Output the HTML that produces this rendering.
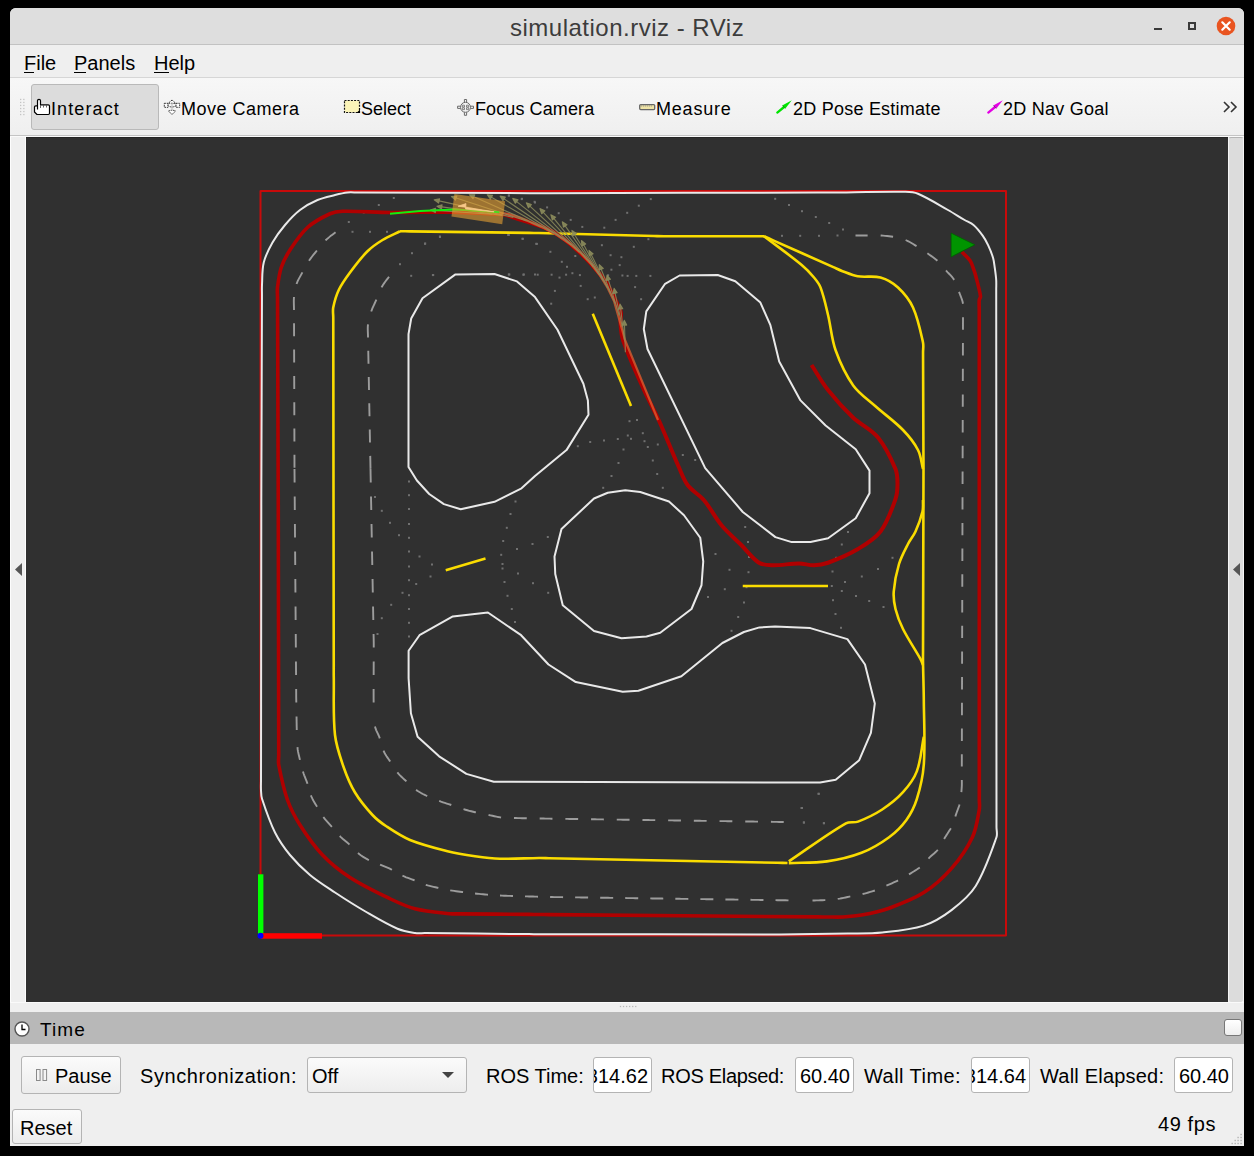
<!DOCTYPE html>
<html><head><meta charset="utf-8">
<style>
html,body{margin:0;padding:0;background:#000;width:1254px;height:1156px;overflow:hidden}
body{position:relative;font-family:"Liberation Sans",sans-serif;color:#000}
.a{position:absolute}
.t{position:absolute;white-space:nowrap;line-height:1}
#win{position:absolute;left:10px;top:8px;width:1234px;height:1138px;background:#efefef;border-radius:6px 6px 0 0;overflow:hidden}
</style></head><body>
<div id="win"></div>
<!-- title bar -->
<div class="a" style="left:10px;top:8px;width:1234px;height:36px;background:#dedede;border-radius:6px 6px 0 0"></div>
<div class="a" style="left:10px;top:44px;width:1234px;height:1px;background:#c2c2c2"></div>
<div class="t" id="title" style="left:510px;top:16px;font-size:24px;letter-spacing:0.5px;color:#3c3c3c">simulation.rviz - RViz</div>
<div class="a" style="left:1154px;top:28px;width:8px;height:2px;background:#3a3a3a"></div>
<div class="a" style="left:1188px;top:22px;width:4px;height:4px;border:2px solid #3a3a3a"></div>
<svg class="a" style="left:1216px;top:16px" width="20" height="20"><circle cx="10" cy="10" r="9.3" fill="#e95420"/><path d="M6.3 6.3 L13.7 13.7 M13.7 6.3 L6.3 13.7" stroke="#fff" stroke-width="2.2" stroke-linecap="round"/></svg>
<!-- menu bar -->
<div class="a" style="left:10px;top:45px;width:1234px;height:32px;background:#efefef"></div>
<div class="a" style="left:10px;top:77px;width:1234px;height:1px;background:#d6d6d6"></div>
<div class="t" id="m1" style="left:24px;top:53px;font-size:20px">File</div>
<div class="t" id="m2" style="left:74px;top:53px;font-size:20px">Panels</div>
<div class="t" id="m3" style="left:154px;top:53px;font-size:20px">Help</div>
<div class="a" style="left:24px;top:72px;width:10px;height:1px;background:#000"></div>
<div class="a" style="left:74px;top:72px;width:12px;height:1px;background:#000"></div>
<div class="a" style="left:154px;top:72px;width:15px;height:1px;background:#000"></div>
<!-- toolbar -->
<div class="a" style="left:10px;top:78px;width:1234px;height:57px;background:linear-gradient(#f7f7f7,#efefef)"></div>
<div class="a" style="left:10px;top:135px;width:1234px;height:1px;background:#c4c4c4"></div>
<div class="a" style="left:10px;top:136px;width:1234px;height:1px;background:#fafafa"></div>
<svg class="a" style="left:18px;top:97px" width="8" height="20"><g fill="#c4c4c4"><rect x="2" y="1.8" width="1.3" height="1.3"/><rect x="2" y="4.8" width="1.3" height="1.3"/><rect x="2" y="7.8" width="1.3" height="1.3"/><rect x="2" y="10.9" width="1.3" height="1.3"/><rect x="2" y="13.9" width="1.3" height="1.3"/><rect x="2" y="16.9" width="1.3" height="1.3"/><rect x="5.2" y="1.8" width="1.3" height="1.3"/><rect x="5.2" y="4.8" width="1.3" height="1.3"/><rect x="5.2" y="7.8" width="1.3" height="1.3"/><rect x="5.2" y="10.9" width="1.3" height="1.3"/><rect x="5.2" y="13.9" width="1.3" height="1.3"/><rect x="5.2" y="16.9" width="1.3" height="1.3"/></g></svg>
<div class="a" style="left:31px;top:84px;width:126px;height:44px;background:#dcdcdc;border:1px solid #b9b9b9;border-radius:3px"></div>
<svg class="a" style="left:33px;top:97px" width="18" height="20"><path d="M4.5,12.5 V3.8 A1.5,1.5 0 0 1 7.5,3.8 V7.8 H15.3 Q16.5,7.8 16.5,9 V16.3 Q16.5,17.5 15.3,17.5 H4 L1.5,15 V10 Q1.5,8.8 2.7,8.8 H4.5" fill="#fff" stroke="#000" stroke-width="1.2" stroke-linejoin="round"/><path d="M7.5,8 V11 M10.5,8 V10.5 M13.5,8 V10.5" stroke="#555" stroke-width="0.9"/></svg>
<div class="t" id="tb1" style="left:51px;top:100px;font-size:18px;letter-spacing:1.1px">Interact</div>
<svg class="a" style="left:158px;top:92px" width="30" height="30"><g fill="#fff" stroke="#333" stroke-width="1" stroke-dasharray="1.6 0.8"><path d="M14,8 L9.5,12 Q14,10.5 18.5,12 Z"/><rect x="6.3" y="11.3" width="3.7" height="4"/><rect x="18" y="11.3" width="3.7" height="4"/><path d="M9.8,13.5 Q14,16.5 18.2,13.5"/><path d="M14,22.5 L10.5,19 Q14,17.5 17.5,19 Z"/></g><path d="M14,11 V18" stroke="#bbb" stroke-width="1"/></svg>
<div class="t" id="tb2" style="left:181px;top:100px;font-size:18px;letter-spacing:0.5px">Move Camera</div>
<svg class="a" style="left:340px;top:92px" width="30" height="30"><rect x="4.5" y="8.5" width="15" height="12" fill="#fbf4b8" stroke="#111" stroke-width="1.2" stroke-dasharray="2 1.2"/><path d="M20,17.5 V21 H16.5 Z" fill="#000"/></svg>
<div class="t" id="tb3" style="left:361px;top:100px;font-size:18px">Select</div>
<svg class="a" style="left:450px;top:92px" width="30" height="30"><g fill="none" stroke="#6a6a6a" stroke-width="1"><circle cx="15.5" cy="15.3" r="5"/><path d="M14.4,10.3 V7.5 H16.6 V10.3 M14.4,20.3 V23.3 H16.6 V20.3 M10.5,14.2 H7.6 V16.4 H10.5 M20.5,14.2 H23.5 V16.4 H20.5"/><path d="M12.3,13.2 H14.5 V15 H12.3Z M16.5,13.2 H18.7 V15 H16.5Z M12.3,15.8 H14.5 V17.6 H12.3Z M16.5,15.8 H18.7 V17.6 H16.5Z" stroke-width="0.8"/></g></svg>
<div class="t" id="tb4" style="left:475px;top:100px;font-size:18px;letter-spacing:0.1px">Focus Camera</div>
<svg class="a" style="left:636px;top:92px" width="30" height="30"><rect x="3.7" y="12.6" width="15" height="5" rx="1" fill="#efe4a6" stroke="#666" stroke-width="1.3"/><path d="M5.3,13.3 V14.6 M7.3,13.3 V14.6 M9.3,13.3 V14.6 M11.3,13.3 V14.6 M13.3,13.3 V14.6 M15.3,13.3 V14.6" stroke="#888" stroke-width="0.8"/></svg>
<div class="t" id="tb5" style="left:656px;top:100px;font-size:18px;letter-spacing:0.8px">Measure</div>
<svg class="a" style="left:770px;top:92px" width="30" height="30"><path d="M7.3,20.6 L13.5,15.5" stroke="#00e400" stroke-width="2.3" stroke-linecap="round"/><path d="M21.8,8.2 L12.2,13.5 L15.2,16.8 Z" fill="#00e400"/><path d="M12.6,13.6 L15,16.3" stroke="#0a4a0a" stroke-opacity="0.6" stroke-width="0.8"/></svg>
<div class="t" id="tb6" style="left:793px;top:100px;font-size:18px;letter-spacing:0.23px">2D Pose Estimate</div>
<svg class="a" style="left:981px;top:92px" width="30" height="30"><path d="M7.3,20.6 L13.5,15.5" stroke="#e400e4" stroke-width="2.3" stroke-linecap="round"/><path d="M21.8,8.2 L12.2,13.5 L15.2,16.8 Z" fill="#e400e4"/><path d="M12.6,13.6 L15,16.3" stroke="#0a4a0a" stroke-opacity="0.6" stroke-width="0.8"/></svg>
<div class="t" id="tb7" style="left:1003px;top:100px;font-size:18px;letter-spacing:0.24px">2D Nav Goal</div>
<svg class="a" style="left:1222px;top:100px" width="16" height="14"><path d="M2 2 L7 7 L2 12 M9 2 L14 7 L9 12" fill="none" stroke="#333" stroke-width="1.6"/></svg>
<!-- side panels -->
<div class="a" style="left:10px;top:137px;width:16px;height:865px;background:#efefef"></div>
<div class="a" style="left:10px;top:137px;width:1px;height:865px;background:#fdfdfd"></div>
<div class="a" style="left:25px;top:137px;width:1px;height:865px;background:#fdfdfd"></div>
<svg class="a" style="left:14px;top:562px" width="9" height="15"><path d="M8 1 L1 7.5 L8 14 Z" fill="#555"/></svg>
<div class="a" style="left:1228px;top:137px;width:14px;height:864px;background:#dcdcdc;border:1px solid #f4f4f4;border-top-color:#b4b4b4;border-radius:3px"></div>
<svg class="a" style="left:1232px;top:562px" width="9" height="15"><path d="M8 1 L1 7.5 L8 14 Z" fill="#555"/></svg>
<!-- viewport -->
<div class="a" style="left:26px;top:137px;width:1202px;height:865px;background:#303030"></div>
<div class="a" style="left:26px;top:137px;width:1202px;height:1px;background:#262626"></div>
<svg width="1254" height="1156" style="position:absolute;left:0;top:0">
<defs><clipPath id="vp"><rect x="26" y="137" width="1202" height="865"/></clipPath></defs>
<g clip-path="url(#vp)" fill="none" stroke-linejoin="round" stroke-linecap="butt">
<g fill="#707070" stroke="none"><rect x="392.8" y="197.0" width="2" height="2"/><rect x="377.8" y="204.0" width="2" height="2"/><rect x="362.8" y="211.5" width="2" height="2"/><rect x="347.8" y="221.0" width="2" height="2"/><rect x="351.5" y="230.8" width="2" height="2"/><rect x="369.0" y="230.8" width="2" height="2"/><rect x="386.0" y="230.8" width="2" height="2"/><rect x="399.0" y="263.2" width="2" height="2"/><rect x="411.0" y="252.2" width="2" height="2"/><rect x="424.0" y="242.8" width="2" height="2"/><rect x="439.0" y="236.0" width="2" height="2"/><rect x="410.2" y="274.8" width="2" height="2"/><rect x="432.2" y="274.0" width="2" height="2"/><rect x="507.8" y="273.5" width="2" height="2"/><rect x="522.8" y="273.5" width="2" height="2"/><rect x="534.0" y="273.5" width="2" height="2"/><rect x="507.8" y="234.0" width="2" height="2"/><rect x="521.5" y="237.8" width="2" height="2"/><rect x="535.2" y="242.8" width="2" height="2"/><rect x="534.0" y="201.5" width="2" height="2"/><rect x="521.0" y="197.8" width="2" height="2"/><rect x="507.8" y="194.5" width="2" height="2"/><rect x="507.9" y="194.6" width="2" height="2"/><rect x="520.7" y="198.1" width="2" height="2"/><rect x="533.6" y="200.8" width="2" height="2"/><rect x="546.1" y="206.4" width="2" height="2"/><rect x="557.7" y="212.2" width="2" height="2"/><rect x="569.7" y="218.9" width="2" height="2"/><rect x="581.3" y="225.9" width="2" height="2"/><rect x="603.3" y="226.7" width="2" height="2"/><rect x="614.6" y="218.9" width="2" height="2"/><rect x="626.2" y="211.8" width="2" height="2"/><rect x="637.8" y="204.7" width="2" height="2"/><rect x="649.8" y="198.1" width="2" height="2"/><rect x="438.9" y="235.5" width="2" height="2"/><rect x="424.2" y="242.5" width="2" height="2"/><rect x="507.2" y="234.0" width="2" height="2"/><rect x="521.8" y="237.8" width="2" height="2"/><rect x="535.9" y="242.9" width="2" height="2"/><rect x="549.4" y="250.8" width="2" height="2"/><rect x="560.8" y="260.8" width="2" height="2"/><rect x="566.0" y="265.8" width="2" height="2"/><rect x="574.3" y="255.0" width="2" height="2"/><rect x="600.9" y="244.2" width="2" height="2"/><rect x="609.6" y="254.2" width="2" height="2"/><rect x="620.4" y="256.2" width="2" height="2"/><rect x="632.8" y="245.8" width="2" height="2"/><rect x="647.4" y="238.2" width="2" height="2"/><rect x="431.9" y="274.1" width="2" height="2"/><rect x="508.3" y="273.5" width="2" height="2"/><rect x="522.4" y="273.7" width="2" height="2"/><rect x="536.7" y="273.7" width="2" height="2"/><rect x="550.6" y="273.7" width="2" height="2"/><rect x="558.5" y="276.6" width="2" height="2"/><rect x="565.1" y="273.7" width="2" height="2"/><rect x="571.4" y="272.2" width="2" height="2"/><rect x="578.9" y="274.1" width="2" height="2"/><rect x="607.1" y="274.3" width="2" height="2"/><rect x="621.4" y="274.5" width="2" height="2"/><rect x="626.6" y="274.9" width="2" height="2"/><rect x="635.3" y="274.9" width="2" height="2"/><rect x="649.4" y="274.9" width="2" height="2"/><rect x="610.4" y="268.7" width="2" height="2"/><rect x="618.7" y="264.1" width="2" height="2"/><rect x="553.9" y="289.9" width="2" height="2"/><rect x="579.7" y="284.9" width="2" height="2"/><rect x="550.2" y="302.7" width="2" height="2"/><rect x="586.7" y="298.2" width="2" height="2"/><rect x="593.8" y="296.5" width="2" height="2"/><rect x="634.1" y="286.1" width="2" height="2"/><rect x="640.1" y="298.2" width="2" height="2"/><rect x="628.5" y="420.2" width="2" height="2"/><rect x="636.0" y="419.0" width="2" height="2"/><rect x="641.8" y="432.2" width="2" height="2"/><rect x="626.8" y="434.5" width="2" height="2"/><rect x="630.0" y="437.8" width="2" height="2"/><rect x="643.5" y="440.2" width="2" height="2"/><rect x="656.8" y="443.5" width="2" height="2"/><rect x="646.8" y="446.0" width="2" height="2"/><rect x="622.5" y="448.5" width="2" height="2"/><rect x="616.8" y="438.0" width="2" height="2"/><rect x="603.0" y="439.5" width="2" height="2"/><rect x="589.2" y="441.0" width="2" height="2"/><rect x="576.8" y="445.2" width="2" height="2"/><rect x="617.5" y="462.0" width="2" height="2"/><rect x="651.8" y="459.5" width="2" height="2"/><rect x="669.2" y="447.8" width="2" height="2"/><rect x="681.8" y="454.0" width="2" height="2"/><rect x="694.2" y="459.0" width="2" height="2"/><rect x="774.2" y="197.8" width="2" height="2"/><rect x="788.0" y="204.0" width="2" height="2"/><rect x="801.0" y="210.2" width="2" height="2"/><rect x="814.8" y="216.0" width="2" height="2"/><rect x="781.0" y="234.8" width="2" height="2"/><rect x="799.2" y="234.8" width="2" height="2"/><rect x="818.0" y="234.8" width="2" height="2"/><rect x="408.0" y="480.5" width="2" height="2"/><rect x="408.0" y="494.2" width="2" height="2"/><rect x="408.0" y="508.0" width="2" height="2"/><rect x="408.0" y="523.0" width="2" height="2"/><rect x="408.0" y="536.8" width="2" height="2"/><rect x="408.0" y="550.5" width="2" height="2"/><rect x="408.0" y="565.5" width="2" height="2"/><rect x="408.0" y="579.2" width="2" height="2"/><rect x="408.0" y="594.2" width="2" height="2"/><rect x="408.0" y="608.0" width="2" height="2"/><rect x="408.0" y="621.8" width="2" height="2"/><rect x="408.0" y="635.5" width="2" height="2"/><rect x="374.0" y="496.0" width="2" height="2"/><rect x="380.8" y="509.8" width="2" height="2"/><rect x="389.0" y="521.8" width="2" height="2"/><rect x="398.0" y="534.2" width="2" height="2"/><rect x="418.5" y="555.5" width="2" height="2"/><rect x="431.0" y="563.5" width="2" height="2"/><rect x="429.5" y="575.5" width="2" height="2"/><rect x="415.2" y="583.0" width="2" height="2"/><rect x="401.5" y="591.8" width="2" height="2"/><rect x="390.2" y="603.8" width="2" height="2"/><rect x="380.8" y="617.2" width="2" height="2"/><rect x="376.5" y="633.0" width="2" height="2"/><rect x="514.5" y="500.5" width="2" height="2"/><rect x="509.5" y="513.0" width="2" height="2"/><rect x="505.8" y="526.8" width="2" height="2"/><rect x="502.2" y="540.0" width="2" height="2"/><rect x="516.0" y="548.0" width="2" height="2"/><rect x="531.5" y="543.0" width="2" height="2"/><rect x="500.2" y="553.8" width="2" height="2"/><rect x="501.5" y="563.0" width="2" height="2"/><rect x="501.5" y="567.5" width="2" height="2"/><rect x="517.0" y="572.5" width="2" height="2"/><rect x="503.5" y="581.0" width="2" height="2"/><rect x="532.0" y="582.2" width="2" height="2"/><rect x="506.5" y="594.8" width="2" height="2"/><rect x="510.8" y="608.0" width="2" height="2"/><rect x="514.0" y="621.0" width="2" height="2"/><rect x="610.5" y="475.0" width="2" height="2"/><rect x="656.2" y="473.0" width="2" height="2"/><rect x="602.2" y="486.8" width="2" height="2"/><rect x="661.8" y="486.8" width="2" height="2"/><rect x="546.8" y="536.0" width="2" height="2"/><rect x="547.2" y="591.8" width="2" height="2"/><rect x="714.5" y="553.0" width="2" height="2"/><rect x="728.5" y="568.8" width="2" height="2"/><rect x="723.8" y="588.2" width="2" height="2"/><rect x="707.0" y="596.0" width="2" height="2"/><rect x="744.2" y="526.0" width="2" height="2"/><rect x="747.0" y="541.0" width="2" height="2"/><rect x="748.0" y="556.0" width="2" height="2"/><rect x="747.5" y="571.2" width="2" height="2"/><rect x="745.5" y="586.2" width="2" height="2"/><rect x="743.0" y="601.5" width="2" height="2"/><rect x="737.2" y="616.0" width="2" height="2"/><rect x="730.5" y="629.8" width="2" height="2"/><rect x="847.0" y="531.0" width="2" height="2"/><rect x="840.8" y="543.5" width="2" height="2"/><rect x="835.2" y="556.8" width="2" height="2"/><rect x="891.5" y="556.8" width="2" height="2"/><rect x="877.0" y="568.0" width="2" height="2"/><rect x="831.5" y="570.5" width="2" height="2"/><rect x="860.8" y="575.5" width="2" height="2"/><rect x="844.0" y="581.0" width="2" height="2"/><rect x="830.8" y="585.0" width="2" height="2"/><rect x="840.8" y="590.0" width="2" height="2"/><rect x="855.0" y="595.0" width="2" height="2"/><rect x="832.0" y="599.2" width="2" height="2"/><rect x="868.2" y="600.0" width="2" height="2"/><rect x="882.5" y="606.0" width="2" height="2"/><rect x="834.5" y="613.0" width="2" height="2"/><rect x="840.0" y="626.8" width="2" height="2"/><rect x="817.5" y="792.8" width="2" height="2"/><rect x="800.5" y="807.0" width="2" height="2"/><rect x="803.0" y="821.5" width="2" height="2"/><rect x="823.0" y="822.2" width="2" height="2"/><rect x="817.8" y="792.8" width="2" height="2"/><rect x="801.0" y="807.0" width="2" height="2"/><rect x="802.8" y="821.5" width="2" height="2"/><rect x="822.8" y="822.2" width="2" height="2"/><rect x="828.2" y="222.0" width="2" height="2"/><rect x="842.0" y="228.5" width="2" height="2"/><rect x="836.5" y="234.5" width="2" height="2"/></g>
<rect x="260.5" y="191" width="745.5" height="744.5" stroke="#c80a0a" stroke-width="2"/>
<path d="M262.00,285.00 C262.41,277.49 261.95,269.80 263.75,262.50 C265.50,255.44 268.91,248.83 272.50,242.50 C276.03,236.26 280.37,230.47 285.00,225.00 C289.57,219.60 294.40,214.31 300.00,210.00 C305.33,205.90 311.32,202.65 317.50,200.00 C323.08,197.61 329.11,196.47 335.00,195.00 C339.12,193.97 343.28,192.96 347.50,192.50 C350.81,192.14 354.17,192.52 357.50,192.54 C415.00,192.75 472.50,192.95 530.00,193.16 C533.33,193.18 536.67,193.20 540.00,193.20 C543.33,193.20 546.67,193.18 550.00,193.18 C639.33,192.96 728.67,192.74 818.00,192.52 C821.33,192.52 824.67,192.53 828.00,192.50 C853.83,192.29 879.67,191.44 905.50,191.80 C909.72,191.86 914.12,192.09 918.00,193.75 C928.45,198.23 938.09,204.42 948.00,210.00 C953.63,213.17 959.03,216.72 964.60,220.00 C967.53,221.73 970.92,222.78 973.50,225.00 C976.98,227.99 979.81,231.69 982.50,235.40 C984.69,238.42 986.51,241.72 988.10,245.10 C990.06,249.28 991.81,253.57 993.10,258.00 C994.05,261.25 994.33,264.65 994.80,268.00 C995.36,271.99 995.94,275.98 996.20,280.00 C996.41,283.33 996.20,286.67 996.21,290.00 C996.30,469.07 996.40,648.13 996.49,827.20 C996.50,830.53 997.61,834.06 996.50,837.20 C990.60,853.87 984.99,870.95 975.70,886.00 C969.72,895.69 960.55,903.19 951.50,910.10 C943.09,916.52 933.87,922.34 923.80,925.60 C910.46,929.92 896.25,931.05 882.30,932.50 C870.82,933.69 859.24,933.27 847.70,933.50 C825.14,933.94 802.57,934.21 780.00,934.50 C776.67,934.54 773.33,934.49 770.00,934.49 C696.33,934.40 622.67,934.30 549.00,934.21 C545.67,934.21 542.33,934.22 539.00,934.20 C535.67,934.18 532.33,934.14 529.00,934.10 C494.33,933.77 459.67,933.43 425.00,933.10 C421.67,933.06 418.29,933.52 415.00,933.00 C409.07,932.06 403.00,931.14 397.50,928.75 C386.22,923.84 375.64,917.42 365.00,911.25 C354.80,905.33 344.85,898.99 335.00,892.50 C326.51,886.90 317.81,881.51 310.00,875.00 C302.76,868.96 295.99,862.28 290.00,855.00 C284.27,848.04 279.02,840.57 275.00,832.50 C269.63,821.71 265.77,810.20 262.00,798.75 C261.08,795.96 261.15,792.93 261.00,790.00 C260.82,786.67 261.01,783.33 261.01,780.00 C261.10,690.00 261.20,600.00 261.29,510.00 C261.29,506.67 261.29,503.33 261.30,500.00 C261.31,496.67 261.32,493.33 261.33,490.00 C261.54,425.00 261.76,360.00 261.97,295.00 C261.98,291.67 261.82,288.33 262.00,285.00Z" stroke="#e9e9e9" stroke-width="2"/>
<path d="M335.57,232.19 L333.99,233.42 L332.41,234.65 L330.83,235.87 L329.27,237.12 L327.73,238.40 L326.23,239.72 L325.50,240.41M316.89,250.53 L315.64,252.09 L314.38,253.64 L313.13,255.21 L311.90,256.78 L310.70,258.38 L309.54,260.01 L308.98,260.84M302.41,272.40 L301.45,274.15 L300.47,275.89 L299.49,277.64 L298.55,279.40 L297.67,281.20 L296.89,283.04 L296.54,283.98M294.00,297.00 L293.86,299.00 L293.81,300.99 L293.83,302.99 L293.88,304.99 L293.95,306.99 L293.99,308.99 L294.00,309.99M294.04,323.29 L294.05,325.29 L294.05,327.29 L294.06,329.29 L294.07,331.29 L294.07,333.29 L294.08,335.29 L294.08,336.29M294.12,349.59 L294.13,351.59 L294.14,353.59 L294.14,355.59 L294.15,357.59 L294.16,359.59 L294.16,361.59 L294.17,362.59M294.21,375.89 L294.21,377.89 L294.22,379.89 L294.23,381.89 L294.23,383.89 L294.24,385.89 L294.24,387.89 L294.25,388.89M294.29,402.19 L294.30,404.19 L294.30,406.19 L294.31,408.19 L294.32,410.19 L294.32,412.19 L294.33,414.19 L294.33,415.19M294.37,428.49 L294.38,430.49 L294.39,432.49 L294.39,434.49 L294.40,436.49 L294.40,438.49 L294.41,440.49 L294.41,441.49M294.46,454.79 L294.46,456.79 L294.47,458.79 L294.47,460.79 L294.48,462.79 L294.48,464.79 L294.49,466.79 L294.49,467.79M294.50,469.00 L294.51,471.00 L294.53,473.00 L294.54,475.00 L294.56,477.00 L294.58,479.00 L294.59,481.00 L294.60,482.50M294.71,496.50 L294.72,498.50 L294.74,500.50 L294.75,502.50 L294.77,504.50 L294.78,506.50 L294.80,508.50 L294.81,510.00M294.92,524.00 L294.93,526.00 L294.95,528.00 L294.96,530.00 L294.98,532.00 L294.99,534.00 L295.01,536.00 L295.02,537.50M295.12,551.50 L295.14,553.50 L295.16,555.50 L295.17,557.50 L295.19,559.50 L295.20,561.50 L295.22,563.50 L295.23,565.00M295.33,579.00 L295.35,581.00 L295.36,583.00 L295.38,585.00 L295.39,587.00 L295.41,589.00 L295.42,591.00 L295.44,592.50M295.54,606.50 L295.56,608.50 L295.57,610.50 L295.59,612.50 L295.60,614.50 L295.62,616.50 L295.63,618.50 L295.64,620.00M295.75,634.00 L295.77,636.00 L295.78,638.00 L295.80,640.00 L295.81,642.00 L295.83,643.99 L295.84,645.99 L295.85,647.49M295.96,661.49 L295.97,663.49 L295.99,665.49 L296.00,667.49 L296.02,669.49 L296.03,671.49 L296.05,673.49 L296.06,674.99M296.17,688.99 L296.18,690.99 L296.19,692.99 L296.19,694.99 L296.20,696.99 L296.23,698.99 L296.27,700.99 L296.30,702.49M296.53,716.49 L296.56,718.49 L296.59,720.49 L296.62,722.49 L296.65,724.49 L296.69,726.49 L296.74,728.49 L296.77,729.99M297.48,747.16 L297.65,749.15 L297.95,751.13 L298.34,753.09 L298.79,755.04 L299.27,756.98 L299.75,758.92 L299.98,759.89M302.96,771.57 L303.57,773.47 L304.25,775.35 L304.98,777.21 L305.73,779.07 L306.47,780.93 L307.17,782.80 L307.50,783.74M310.87,795.31 L311.64,797.15 L312.52,798.95 L313.46,800.71 L314.46,802.45 L315.49,804.16 L316.53,805.87 L317.04,806.73M323.37,816.98 L324.58,818.57 L325.85,820.11 L327.17,821.62 L328.51,823.10 L329.87,824.57 L331.21,826.05 L331.88,826.79M339.71,835.95 L341.14,837.35 L342.62,838.69 L344.15,839.98 L345.68,841.27 L347.22,842.55 L348.73,843.85 L349.48,844.52M357.95,853.08 L359.50,854.34 L361.12,855.52 L362.78,856.63 L364.48,857.68 L366.22,858.67 L367.98,859.61 L368.88,860.06M380.07,864.52 L381.92,865.28 L383.76,866.06 L385.60,866.84 L387.43,867.64 L389.26,868.45 L391.07,869.30 L391.97,869.74M402.48,875.63 L404.28,876.49 L406.13,877.27 L407.99,877.98 L409.88,878.66 L411.77,879.32 L413.65,879.99 L414.58,880.34M425.76,884.84 L427.67,885.43 L429.60,885.95 L431.54,886.43 L433.49,886.87 L435.45,887.29 L437.41,887.71 L438.38,887.92M450.19,890.33 L452.16,890.64 L454.14,890.93 L456.12,891.21 L458.10,891.49 L460.09,891.75 L462.07,892.01 L463.06,892.14M475.03,893.50 L477.02,893.71 L479.01,893.90 L481.00,894.10 L483.00,894.28 L484.99,894.46 L486.98,894.63 L487.98,894.71M500.00,895.50 L502.00,895.59 L504.00,895.68 L505.99,895.76 L507.99,895.84 L509.99,895.91 L511.99,895.98 L512.99,896.01M525.03,896.37 L527.03,896.42 L529.03,896.47 L531.03,896.52 L533.03,896.57 L535.03,896.62 L537.03,896.67 L538.03,896.70M550.08,897.00 L552.08,897.05 L554.08,897.08 L556.08,897.10 L558.08,897.12 L560.08,897.14 L562.08,897.17 L563.08,897.18M575.12,897.35 L577.12,897.38 L579.12,897.41 L581.12,897.44 L583.12,897.46 L585.12,897.49 L587.12,897.52 L588.12,897.53M600.17,897.70 L602.17,897.73 L604.17,897.76 L606.17,897.79 L608.17,897.81 L610.17,897.84 L612.17,897.87 L613.17,897.88M625.22,898.05 L627.22,898.08 L629.22,898.11 L631.22,898.14 L633.22,898.17 L635.22,898.19 L637.22,898.22 L638.22,898.24M650.27,898.40 L652.27,898.43 L654.27,898.46 L656.27,898.49 L658.27,898.52 L660.27,898.54 L662.27,898.57 L663.27,898.59M675.31,898.75 L677.31,898.78 L679.31,898.81 L681.31,898.84 L683.31,898.87 L685.31,898.89 L687.31,898.92 L688.31,898.94M700.36,899.11 L702.36,899.13 L704.36,899.16 L706.36,899.19 L708.36,899.22 L710.36,899.25 L712.36,899.27 L713.36,899.29M725.41,899.46 L727.41,899.48 L729.41,899.51 L731.41,899.54 L733.41,899.57 L735.41,899.60 L737.41,899.62 L738.41,899.64M750.46,899.81 L752.46,899.83 L754.46,899.86 L756.46,899.89 L758.46,899.92 L760.46,899.95 L762.46,899.97 L763.46,899.99M775.50,900.16 L777.50,900.19 L779.50,900.21 L781.50,900.24 L783.50,900.27 L785.50,900.30 L787.50,900.33 L788.50,900.34M812.50,900.50 L814.50,900.46 L816.50,900.41 L818.50,900.36 L820.50,900.29 L822.50,900.21 L824.49,900.11 L825.29,900.06M837.73,898.90 L839.71,898.60 L841.68,898.25 L843.64,897.86 L845.60,897.45 L847.56,897.03 L849.51,896.61 L850.29,896.44M862.56,894.04 L864.50,893.56 L866.44,893.05 L868.36,892.52 L870.28,891.96 L872.19,891.37 L874.10,890.75 L874.85,890.49M886.40,885.71 L888.22,884.90 L890.06,884.10 L891.89,883.29 L893.71,882.48 L895.54,881.65 L897.35,880.81 L898.07,880.46M908.98,874.38 L910.68,873.33 L912.39,872.28 L914.09,871.23 L915.79,870.17 L917.46,869.07 L919.10,867.92 L919.74,867.45M928.48,858.56 L929.88,857.13 L931.35,855.77 L932.87,854.46 L934.39,853.16 L935.88,851.83 L937.30,850.43 L937.84,849.84M944.13,839.08 L945.10,837.33 L946.14,835.63 L947.23,833.95 L948.33,832.28 L949.41,830.60 L950.46,828.89 L950.86,828.20M955.34,816.56 L955.95,814.66 L956.60,812.76 L957.29,810.89 L957.99,809.01 L958.67,807.13 L959.30,805.23 L959.52,804.47M961.37,792.12 L961.53,790.13 L961.67,788.13 L961.75,787.00M961.75,787.00 L961.84,785.00 L961.86,783.00 L961.83,781.00 L961.81,779.90M961.80,766.60 L961.81,764.60 L961.81,762.60 L961.82,760.60 L961.83,758.60 L961.83,756.60 L961.84,754.60 L961.84,754.20M961.87,740.90 L961.88,738.90 L961.88,736.90 L961.89,734.90 L961.89,732.90 L961.90,730.90 L961.90,728.90 L961.91,728.50M961.94,715.20 L961.95,713.20 L961.95,711.20 L961.96,709.20 L961.96,707.20 L961.97,705.20 L961.97,703.20 L961.97,702.80M962.01,689.50 L962.01,687.50 L962.02,685.50 L962.03,683.50 L962.03,681.50 L962.04,679.50 L962.04,677.50 L962.04,677.10M962.08,663.80 L962.08,661.80 L962.09,659.80 L962.09,657.80 L962.10,655.80 L962.10,653.80 L962.11,651.80 L962.11,651.40M962.15,638.10 L962.15,636.10 L962.16,634.10 L962.16,632.10 L962.17,630.10 L962.17,628.10 L962.18,626.10 L962.18,625.70M962.21,612.40 L962.22,610.40 L962.23,608.40 L962.23,606.40 L962.24,604.40 L962.24,602.40 L962.25,600.40 L962.25,600.00M962.28,586.70 L962.29,584.70 L962.29,582.70 L962.30,580.70 L962.30,578.70 L962.31,576.70 L962.31,574.70 L962.32,574.30M962.35,561.00 L962.36,559.00 L962.36,557.00 L962.37,555.00 L962.37,553.00 L962.38,551.00 L962.38,549.00 L962.38,548.60M962.42,535.30 L962.42,533.30 L962.43,531.30 L962.44,529.30 L962.44,527.30 L962.45,525.30 L962.45,523.30 L962.45,522.90M962.49,509.60 L962.49,507.60 L962.50,505.60 L962.50,503.60 L962.51,501.60 L962.51,499.60 L962.52,497.60 L962.52,497.20M962.56,483.90 L962.56,481.90 L962.57,479.90 L962.57,477.90 L962.58,475.90 L962.58,473.90 L962.59,471.90 L962.59,471.50M962.62,458.20 L962.63,456.20 L962.64,454.20 L962.64,452.20 L962.65,450.20 L962.65,448.20 L962.66,446.20 L962.66,445.80M962.69,432.50 L962.70,430.50 L962.70,428.50 L962.71,426.50 L962.71,424.50 L962.72,422.50 L962.72,420.50 L962.73,420.10M962.76,406.80 L962.77,404.80 L962.77,402.80 L962.78,400.80 L962.78,398.80 L962.79,396.80 L962.79,394.80 L962.79,394.40M962.83,381.10 L962.83,379.10 L962.84,377.10 L962.85,375.10 L962.85,373.10 L962.86,371.10 L962.86,369.10 L962.86,368.70M962.90,355.40 L962.90,353.40 L962.91,351.40 L962.91,349.40 L962.92,347.40 L962.92,345.40 L962.93,343.40 L962.93,343.00M962.97,329.70 L962.97,327.70 L962.98,325.70 L962.98,323.70 L962.99,321.70 L962.99,319.70 L963.00,317.70 L963.00,317.30M963.00,303.75 L962.60,301.79 L962.05,299.87 L961.39,297.98 L960.66,296.12 L959.92,294.26 L959.21,292.39 L959.04,291.92M954.18,279.89 L953.06,278.23 L951.80,276.68 L950.46,275.20 L949.07,273.76 L947.70,272.31 L946.37,270.81 L946.05,270.43M937.42,260.72 L935.89,259.43 L934.31,258.20 L932.70,257.02 L931.06,255.88 L929.42,254.74 L927.78,253.59 L927.37,253.30M916.54,246.12 L914.83,245.07 L913.13,244.02 L911.41,243.00 L909.67,242.01 L907.90,241.09 L906.08,240.25 L905.62,240.05M893.07,236.80 L891.09,236.49 L889.11,236.23 L887.12,236.01 L885.13,235.83 L883.13,235.67 L881.14,235.54 L880.64,235.51M867.64,235.50 L865.64,235.50 L863.64,235.50 L861.64,235.50 L859.64,235.50 L857.64,235.50 L855.64,235.50 L855.50,235.50" stroke="#9c9c9c" stroke-width="1.9"/>
<path d="M389.02,276.71 L387.81,278.31 L386.59,279.89 L385.39,281.49 L384.22,283.11 L383.10,284.77 L382.07,286.48 L381.59,287.36M376.39,299.60 L375.58,301.42 L374.73,303.24 L373.89,305.05 L373.06,306.87 L372.27,308.71 L371.55,310.57 L371.23,311.52M368.00,324.40 L367.82,326.39 L367.76,328.39 L367.79,330.39 L367.86,332.39 L367.94,334.39 L368.00,336.39 L368.01,337.39M368.27,350.68 L368.30,352.68 L368.34,354.68 L368.38,356.68 L368.42,358.68 L368.45,360.68 L368.49,362.68 L368.51,363.68M368.76,376.98 L368.80,378.98 L368.84,380.98 L368.88,382.98 L368.91,384.98 L368.95,386.98 L368.99,388.98 L369.01,389.98M369.26,403.27 L369.30,405.27 L369.33,407.27 L369.37,409.27 L369.41,411.27 L369.45,413.27 L369.49,415.27 L369.50,416.27M369.76,429.57 L369.79,431.57 L369.83,433.57 L369.87,435.57 L369.91,437.57 L369.94,439.57 L369.98,441.57 L370.00,442.57M370.25,455.86 L370.29,457.86 L370.33,459.86 L370.37,461.86 L370.40,463.86 L370.44,465.86 L370.48,467.86 L370.50,468.86M370.50,469.00 L370.54,471.00 L370.57,473.00 L370.61,475.00 L370.65,477.00 L370.69,479.00 L370.72,481.00 L370.75,482.50M371.01,496.50 L371.05,498.49 L371.08,500.49 L371.12,502.49 L371.16,504.49 L371.20,506.49 L371.23,508.49 L371.26,509.99M371.52,523.99 L371.56,525.99 L371.60,527.99 L371.63,529.99 L371.67,531.99 L371.71,533.99 L371.74,535.99 L371.77,537.49M372.03,551.49 L372.07,553.49 L372.11,555.49 L372.14,557.48 L372.18,559.48 L372.22,561.48 L372.25,563.48 L372.28,564.98M372.54,578.98 L372.58,580.98 L372.62,582.98 L372.65,584.98 L372.69,586.98 L372.73,588.98 L372.77,590.98 L372.79,592.48M373.05,606.48 L373.09,608.48 L373.13,610.48 L373.16,612.48 L373.20,614.47 L373.24,616.47 L373.28,618.47 L373.30,619.97M373.56,633.97 L373.61,635.97 L373.65,637.97 L373.70,639.97 L373.73,641.97 L373.75,643.97 L373.75,645.97 L373.75,647.47M373.72,661.47 L373.71,663.47 L373.70,665.47 L373.69,667.47 L373.68,669.47 L373.67,671.47 L373.66,673.47 L373.65,674.97M373.61,688.97 L373.61,690.97 L373.61,692.97 L373.62,694.97 L373.62,696.97 L373.63,698.97 L373.64,700.97 L373.65,702.47M375.00,726.50 L375.54,728.42 L376.27,730.29 L377.10,732.11 L377.96,733.91 L378.80,735.73 L379.53,737.59 L379.79,738.35M383.51,750.69 L384.35,752.50 L385.32,754.25 L386.39,755.94 L387.51,757.60 L388.65,759.24 L389.77,760.90 L390.21,761.57M397.34,772.30 L398.63,773.83 L399.99,775.30 L401.41,776.72 L402.85,778.10 L404.32,779.46 L405.78,780.82 L406.37,781.36M416.06,789.86 L417.71,790.99 L419.41,792.04 L421.14,793.04 L422.91,793.99 L424.69,794.89 L426.49,795.77 L427.21,796.11M439.17,800.94 L441.04,801.63 L442.93,802.28 L444.83,802.91 L446.74,803.53 L448.64,804.14 L450.54,804.76 L451.30,805.02M463.51,809.18 L465.43,809.74 L467.35,810.28 L469.28,810.80 L471.22,811.29 L473.16,811.77 L475.11,812.24 L475.89,812.42M488.54,814.96 L490.49,815.37 L492.45,815.80 L494.40,816.25 L496.35,816.67 L498.31,817.06 L500.29,817.38 L501.08,817.48M513.96,817.99 L515.96,818.04 L517.96,818.09 L519.96,818.14 L521.96,818.18 L523.96,818.22 L525.96,818.26 L526.76,818.28M539.66,818.51 L541.66,818.54 L543.66,818.57 L545.66,818.60 L547.66,818.62 L549.66,818.65 L551.66,818.68 L552.46,818.69M565.36,818.88 L567.36,818.91 L569.35,818.93 L571.35,818.96 L573.35,818.99 L575.35,819.02 L577.35,819.05 L578.15,819.06M591.05,819.24 L593.05,819.27 L595.05,819.30 L597.05,819.33 L599.05,819.36 L601.05,819.39 L603.05,819.42 L603.85,819.43M616.75,819.61 L618.75,819.64 L620.75,819.67 L622.75,819.70 L624.75,819.72 L626.75,819.75 L628.75,819.78 L629.55,819.79M642.45,819.98 L644.45,820.01 L646.45,820.03 L648.45,820.06 L650.45,820.09 L652.45,820.12 L654.45,820.15 L655.25,820.16M668.14,820.34 L670.14,820.37 L672.14,820.40 L674.14,820.43 L676.14,820.46 L678.14,820.49 L680.14,820.52 L680.94,820.53M693.84,820.71 L695.84,820.74 L697.84,820.77 L699.84,820.80 L701.84,820.83 L703.84,820.85 L705.84,820.88 L706.64,820.89M719.54,821.08 L721.54,821.11 L723.54,821.14 L725.54,821.16 L727.54,821.19 L729.54,821.22 L731.54,821.25 L732.34,821.26M745.24,821.45 L747.24,821.47 L749.24,821.50 L751.24,821.53 L753.24,821.56 L755.24,821.59 L757.24,821.62 L758.04,821.63M770.93,821.81 L772.93,821.84 L774.93,821.87 L776.93,821.90 L778.93,821.93 L780.93,821.96 L782.93,821.98 L783.73,822.00" stroke="#9c9c9c" stroke-width="1.9"/>
<polygon points="408.50,467.00 408.50,334.20 411.20,318.50 422.50,298.20 455.10,274.60 494.50,274.00 517.00,281.40 535.00,297.10 557.50,329.70 583.40,383.70 587.90,400.60 588.50,414.80 566.50,450.10 535.00,476.00 521.50,488.30 494.50,501.80 460.70,509.30 443.90,504.10 429.20,494.00 416.90,480.50" stroke="#e9e9e9" stroke-width="2"/>
<polygon points="679.60,275.50 717.70,275.00 735.30,281.30 760.40,302.60 770.40,325.20 779.20,361.50 800.50,400.40 825.60,425.50 855.70,449.30 869.50,470.60 869.50,493.20 855.70,518.30 828.10,538.30 810.50,542.10 791.70,542.10 775.40,537.10 742.80,512.00 705.20,468.10 647.50,349.00 643.80,329.00 646.30,311.40 665.10,283.80" stroke="#e9e9e9" stroke-width="2"/>
<polygon points="561.50,529.00 594.00,498.50 607.75,492.75 625.25,490.25 640.25,492.00 669.00,501.50 684.00,515.25 700.25,537.75 703.25,561.50 701.50,585.25 691.50,609.00 660.25,632.75 646.50,636.50 621.50,638.25 594.00,631.00 562.75,605.25 555.25,574.00 554.50,556.50" stroke="#e9e9e9" stroke-width="2"/>
<polygon points="408.60,650.80 419.50,635.20 452.80,616.40 487.90,612.50 521.10,635.20 548.50,664.50 575.80,682.10 622.70,691.80 638.40,690.70 681.40,676.20 722.40,643.00 743.90,632.00 759.50,627.40 775.10,626.60 810.30,628.10 847.40,639.10 865.00,664.50 874.80,703.60 870.90,732.90 859.20,760.20 835.70,779.80 820.10,782.50 786.90,782.50 511.40,781.70 493.80,781.70 466.40,773.90 439.10,756.30 417.60,736.80 410.90,713.30 408.60,678.20" stroke="#e9e9e9" stroke-width="2"/>
<g stroke="#fadc00" stroke-width="2.6">
<path d="M400.00,231.25 C403.33,231.29 406.67,231.33 410.00,231.38 C449.67,231.88 489.33,232.37 529.00,232.87 C532.33,232.92 535.67,232.94 539.00,233.00 C542.33,233.06 545.66,233.17 549.00,233.26 C584.00,234.17 619.00,235.08 654.00,235.99 C657.34,236.08 660.67,236.21 664.00,236.25 C667.33,236.29 670.67,236.25 674.00,236.25 C700.67,236.25 727.33,236.25 754.00,236.25 C757.33,236.25 760.67,236.25 764.00,236.25"/><path d="M764.00,236.25 C767.05,237.61 770.09,238.96 773.14,240.32 C793.21,249.26 813.29,258.19 833.36,267.13 C836.41,268.49 839.38,270.02 842.50,271.20 C847.50,273.08 852.43,275.43 857.70,276.30 C865.21,277.54 873.17,275.46 880.50,277.50 C886.97,279.30 893.06,282.94 898.00,287.50 C904.12,293.15 909.55,299.91 913.00,307.50 C918.02,318.55 920.36,330.66 923.00,342.50 C923.73,345.75 923.03,349.17 923.04,352.50 C923.18,388.00 923.32,423.50 923.46,459.00 C923.47,462.33 923.50,465.67 923.50,469.00 C923.50,472.33 923.48,475.67 923.47,479.00 C923.32,536.50 923.18,594.00 923.03,651.50 C923.02,654.83 922.95,658.17 923.00,661.50 C923.20,674.33 923.70,687.16 923.80,700.00 C923.97,721.50 925.31,743.05 923.80,764.50 C922.97,776.24 920.33,787.87 916.80,799.10 C914.48,806.50 910.96,813.63 906.40,819.90 C901.60,826.50 895.68,832.38 889.10,837.20 C880.58,843.45 871.35,848.97 861.50,852.80 C850.42,857.11 838.67,859.73 826.90,861.40 C814.31,863.18 801.50,862.53 788.80,863.10"/><path d="M787.50,863.00 C784.17,862.93 780.83,862.87 777.50,862.80 C701.33,861.27 625.17,859.73 549.00,858.20 C545.67,858.13 542.33,857.96 539.00,858.00 C526.00,858.15 513.00,859.11 500.00,858.75 C491.63,858.52 483.29,857.43 475.00,856.25 C465.78,854.93 456.54,853.51 447.50,851.25 C434.84,848.08 422.08,844.93 410.00,840.00 C401.53,836.54 393.86,831.32 386.25,826.25 C381.32,822.97 376.52,819.35 372.50,815.00 C366.04,808.03 359.92,800.63 355.00,792.50 C350.27,784.68 346.75,776.13 343.75,767.50 C340.06,756.90 336.23,746.15 335.00,735.00 C332.87,715.61 334.11,696.00 333.75,676.50 C333.69,673.17 333.74,669.83 333.74,666.50 C333.58,550.17 333.42,433.83 333.26,317.50 C333.26,314.17 332.60,310.77 333.25,307.50 C334.45,301.50 336.11,295.52 338.75,290.00 C341.74,283.74 345.87,278.07 350.00,272.50 C355.47,265.13 361.01,257.74 367.50,251.25 C371.92,246.83 377.18,243.28 382.50,240.00 C388.05,236.58 394.17,234.17 400.00,231.25"/>
<path d="M764.00,236.25 C776.57,245.83 789.51,254.94 801.70,265.00 C806.21,268.72 810.25,273.02 814.00,277.50 C816.58,280.59 819.19,283.83 820.60,287.60 C823.94,296.53 825.88,305.93 828.10,315.20 C830.88,326.84 831.57,339.03 835.60,350.30 C840.01,362.62 845.60,374.74 853.20,385.40 C859.11,393.69 867.92,399.46 875.50,406.25 C884.52,414.33 894.56,421.31 903.00,430.00 C908.81,435.98 914.20,442.58 918.00,450.00 C920.99,455.83 921.33,462.67 923.00,469.00"/>
<path d="M923.00,500.00 C922.83,503.83 923.39,507.77 922.50,511.50 C920.86,518.37 918.38,525.05 915.50,531.50 C913.52,535.94 910.20,539.67 908.00,544.00 C904.69,550.52 901.10,557.00 899.00,564.00 C896.32,572.94 894.47,582.20 893.75,591.50 C893.30,597.34 894.10,603.31 895.50,609.00 C897.21,615.91 899.82,622.63 903.00,629.00 C908.18,639.35 914.88,648.88 920.50,659.00 C921.55,660.89 922.17,663.00 923.00,665.00"/>
<path d="M923.80,736.80 C921.47,748.33 920.94,760.38 916.80,771.40 C913.88,779.19 908.59,786.04 903.00,792.20 C896.94,798.88 889.75,804.57 882.20,809.50 C874.65,814.43 866.43,818.40 858.00,821.60 C854.19,823.05 849.43,821.27 845.90,823.30 C826.07,834.71 807.83,848.70 788.80,861.40"/>
<polyline points="592.75,313.75 631.00,406.00"/><polyline points="445.75,570.25 485.50,558.50"/><polyline points="742.75,586.00 828.00,586.00"/>
</g>
<path d="M505.00,214.70 C496.67,214.20 488.34,213.59 480.00,213.20 C470.34,212.75 460.67,212.36 451.00,212.20 C440.67,212.03 430.33,212.15 420.00,212.20 C410.00,212.25 400.00,212.62 390.00,212.50 C374.16,212.31 358.34,210.92 342.50,211.25 C338.25,211.34 333.85,211.96 330.00,213.75 C322.03,217.45 314.01,221.60 307.50,227.50 C300.46,233.88 295.21,242.06 290.00,250.00 C286.42,255.45 283.31,261.31 281.25,267.50 C279.11,273.93 278.33,280.77 277.50,287.50 C277.09,290.81 277.52,294.17 277.54,297.50 C277.76,361.67 277.99,425.83 278.21,490.00 C278.23,493.33 278.24,496.67 278.25,500.00 C278.26,503.33 278.26,506.67 278.27,510.00 C278.42,591.67 278.58,673.33 278.73,755.00 C278.74,758.33 278.11,761.73 278.75,765.00 C281.05,776.80 283.49,788.66 287.50,800.00 C290.61,808.78 295.00,817.14 300.00,825.00 C306.71,835.55 313.88,845.95 322.50,855.00 C330.67,863.58 340.06,871.06 350.00,877.50 C362.67,885.71 376.39,892.21 390.00,898.75 C398.09,902.64 406.29,906.57 415.00,908.75 C426.43,911.61 438.29,912.43 450.00,913.75 C453.31,914.12 456.67,913.81 460.00,913.83 C483.00,914.03 506.00,914.22 529.00,914.42 C532.33,914.44 535.67,914.47 539.00,914.50 C542.33,914.53 545.67,914.56 549.00,914.59 C638.67,915.36 728.33,916.14 818.00,916.91 C821.33,916.94 824.67,916.99 828.00,917.00 C832.83,917.02 837.67,917.27 842.50,917.00 C848.85,916.64 855.25,916.28 861.50,915.10 C870.82,913.34 880.18,911.42 889.10,908.20 C901.03,903.89 913.11,899.42 923.80,892.60 C934.14,886.01 943.41,877.62 951.50,868.40 C959.76,858.99 967.06,848.52 972.40,837.20 C976.46,828.59 977.59,818.86 979.30,809.50 C979.90,806.22 979.30,802.83 979.30,799.50 C979.28,636.33 979.27,473.17 979.25,310.00 C979.25,306.67 978.95,303.32 979.25,300.00 C979.37,298.69 980.70,297.55 980.50,296.25 C979.42,289.05 977.29,282.05 975.50,275.00 C974.99,273.00 974.32,271.04 973.60,269.10 C972.55,266.30 971.88,263.27 970.20,260.80 C967.89,257.41 964.60,254.80 961.80,251.80" stroke="#b00000" stroke-width="3.6"/>
<path d="M505.00,214.70 C512.00,216.93 519.02,219.10 526.00,221.40 C532.46,223.53 539.07,225.28 545.30,228.00 C550.71,230.37 556.02,233.13 560.80,236.60 C568.14,241.94 574.91,248.06 581.50,254.30 C587.36,259.84 592.83,265.80 598.10,271.90 C601.51,275.85 604.87,279.90 607.50,284.40 C612.17,292.41 615.99,300.89 619.90,309.30 C620.50,310.58 620.94,311.99 621.00,313.40 C621.14,316.53 620.26,319.67 620.50,322.80 C620.93,328.58 621.09,334.53 623.00,340.00 C628.97,357.06 636.63,373.49 644.00,390.00 C648.54,400.17 654.12,409.85 658.70,420.00 C665.79,435.69 672.00,451.77 679.00,467.50 C681.68,473.53 683.75,480.01 687.75,485.25 C692.22,491.11 699.25,494.62 704.00,500.25 C710.56,508.02 714.99,517.44 721.50,525.25 C727.54,532.49 734.83,538.58 741.50,545.25 C747.33,551.08 752.05,558.30 759.00,562.75 C762.92,565.26 768.09,565.16 772.75,565.25 C781.52,565.41 790.23,563.50 799.00,563.50 C804.03,563.50 808.97,565.38 814.00,565.25 C818.74,565.13 823.55,564.39 828.00,562.75 C838.32,558.94 848.55,554.63 858.00,549.00 C866.16,544.14 874.80,539.10 880.50,531.50 C887.66,521.95 891.48,510.23 895.50,499.00 C897.20,494.25 897.50,489.04 897.50,484.00 C897.50,478.96 897.45,473.65 895.50,469.00 C890.85,457.92 885.65,446.76 878.00,437.50 C871.21,429.27 860.74,424.85 853.00,417.50 C844.02,408.97 835.68,399.72 828.00,390.00 C821.81,382.17 817.00,373.33 811.50,365.00" stroke="#b00000" stroke-width="4"/>
<path d="M499,212.5 Q515,214 531.3,222.6 A143.2,143.2 0 0 1 614,301 L625,340 L658,420" stroke="#e06030" stroke-opacity="0.75" stroke-width="2.2"/>
<g stroke="#8c8c5c" stroke-width="1.1" fill="#8c8c5c" stroke-opacity="0.85" fill-opacity="0.9"><line x1="492.3" y1="214.3" x2="435.4" y2="210.4"/><polygon points="430.4,210.0 435.3,212.6 435.6,208.2"/><line x1="502.2" y1="215.4" x2="441.8" y2="206.9"/><polygon points="436.9,206.2 441.5,209.1 442.1,204.7"/><line x1="513.3" y1="217.4" x2="439.1" y2="200.9"/><polygon points="434.2,199.9 438.6,203.1 439.6,198.8"/><line x1="526.6" y1="221.0" x2="456.2" y2="198.1"/><polygon points="451.4,196.6 455.5,200.2 456.9,196.0"/><line x1="540.5" y1="226.4" x2="473.9" y2="196.7"/><polygon points="469.3,194.7 473.0,198.7 474.8,194.7"/><line x1="553.9" y1="233.2" x2="491.5" y2="197.2"/><polygon points="487.2,194.7 490.4,199.1 492.6,195.3"/><line x1="562.9" y1="238.8" x2="504.2" y2="198.9"/><polygon points="500.1,196.1 503.0,200.7 505.4,197.1"/><line x1="571.4" y1="245.1" x2="516.7" y2="201.6"/><polygon points="512.7,198.4 515.3,203.3 518.0,199.8"/><line x1="579.5" y1="252.0" x2="529.9" y2="206.2"/><polygon points="526.3,202.8 528.4,207.8 531.4,204.6"/><line x1="587.5" y1="260.0" x2="543.3" y2="212.3"/><polygon points="539.9,208.6 541.7,213.8 544.9,210.8"/><line x1="593.2" y1="266.6" x2="554.0" y2="218.6"/><polygon points="550.8,214.7 552.3,220.0 555.7,217.2"/><line x1="599.6" y1="275.1" x2="565.2" y2="225.9"/><polygon points="562.3,221.8 563.4,227.2 567.0,224.7"/><line x1="603.7" y1="281.3" x2="574.6" y2="234.7"/><polygon points="571.9,230.4 572.7,235.8 576.5,233.5"/><line x1="607.5" y1="287.8" x2="583.8" y2="244.9"/><polygon points="581.4,240.5 581.9,246.0 585.7,243.9"/><line x1="610.5" y1="293.3" x2="591.3" y2="254.8"/><polygon points="589.0,250.3 589.3,255.8 593.2,253.8"/><line x1="615.1" y1="303.6" x2="601.2" y2="269.3"/><polygon points="599.3,264.6 599.2,270.1 603.3,268.4"/><line x1="619.2" y1="315.3" x2="608.4" y2="279.9"/><polygon points="607.0,275.2 606.3,280.6 610.5,279.3"/><line x1="622.4" y1="327.4" x2="615.1" y2="293.2"/><polygon points="614.1,288.3 612.9,293.6 617.2,292.7"/><line x1="624.4" y1="339.7" x2="620.7" y2="309.0"/><polygon points="620.0,304.0 618.5,309.2 622.8,308.7"/><line x1="625.4" y1="352.2" x2="624.5" y2="325.2"/><polygon points="624.3,320.2 622.3,325.3 626.7,325.1"/></g>
<polyline points="390.00,213.75 420.00,211.00 455.00,209.50 499.30,212.30" stroke="#10f010" stroke-width="1.8"/>
<polygon points="454.40,194.10 505.10,201.30 502.20,224.20 451.50,216.60" fill="#e6a032" fill-opacity="0.6" stroke="none"/>
<polyline points="493,211.6 499.3,212.3" stroke="#40e020" stroke-width="1.6"/>

<polygon points="458.1,206.2 466,203.6 465.5,209 494.1,211.8 465.2,207.2" fill="#f7c888" stroke="#f7c888" stroke-width="0.8"/><polygon points="951.1,233.1 974.9,244.8 951.1,256.9" fill="#009400" stroke="#006000" stroke-width="0.8"/>
<rect x="258" y="874.3" width="5.4" height="61.4" fill="#00ff00" stroke="none"/>
<rect x="260.5" y="933.2" width="61.5" height="5.5" fill="#ff0000" stroke="none"/>
<circle cx="260.5" cy="935.7" r="3" fill="#0000ff" stroke="none"/>
</g></svg>
<!-- splitter -->
<div class="a" style="left:10px;top:1002px;width:1234px;height:1px;background:#fafafa"></div>
<svg class="a" style="left:615px;top:1000px" width="30" height="12"><g fill="#b8b8b8"><rect x="4.85" y="5.85" width="1.3" height="1.3"/><rect x="7.90" y="5.85" width="1.3" height="1.3"/><rect x="10.95" y="5.85" width="1.3" height="1.3"/><rect x="14.00" y="5.85" width="1.3" height="1.3"/><rect x="17.05" y="5.85" width="1.3" height="1.3"/><rect x="20.10" y="5.85" width="1.3" height="1.3"/></g></svg>
<!-- time panel -->
<div class="a" style="left:10px;top:1012px;width:1234px;height:32px;background:#b8b8b8"></div>
<svg class="a" style="left:13px;top:1020px" width="18" height="18"><circle cx="9" cy="9" r="7" fill="#fff" stroke="#555" stroke-width="1.4"/><path d="M9 4.5 V9.5 H12.5" fill="none" stroke="#000" stroke-width="1.3"/></svg>
<div class="t" id="tm" style="left:40px;top:1020px;font-size:19px;letter-spacing:1.1px">Time</div>
<div class="a" style="left:1224px;top:1019px;width:16px;height:15px;background:linear-gradient(#fff,#eee);border:1px solid #777;border-radius:3px"></div>
<div class="a" style="left:10px;top:1044px;width:1234px;height:102px;background:#efefef"></div>
<div class="a" style="left:21px;top:1056px;width:98px;height:36px;background:linear-gradient(#fbfbfb,#ececec);border:1px solid #b4b4b4;border-radius:3px"></div>
<svg class="a" style="left:35px;top:1068px" width="14" height="14"><rect x="1.5" y="1.5" width="3.6" height="11" fill="#f4f4f4" stroke="#8a8a8a"/><rect x="8" y="1.5" width="3.6" height="11" fill="#f4f4f4" stroke="#8a8a8a"/></svg>
<div class="t" id="b1" style="left:55px;top:1066px;font-size:20px">Pause</div>
<div class="t" id="l1" style="left:140px;top:1066px;font-size:20px;letter-spacing:0.58px">Synchronization:</div>
<div class="a" style="left:307px;top:1057px;width:158px;height:34px;background:linear-gradient(#fbfbfb,#ededed);border:1px solid #b4b4b4;border-radius:3px"></div>
<div class="t" id="c1" style="left:312px;top:1066px;font-size:20px">Off</div>
<svg class="a" style="left:441px;top:1071px" width="14" height="8"><path d="M1 1 H13 L7 7 Z" fill="#444"/></svg>
<div class="t" id="l2" style="left:486px;top:1066px;font-size:20px">ROS Time:</div>
<div class="a" style="left:593px;top:1057px;width:57px;height:34px;background:#fff;border:1px solid #b4b4b4;border-radius:3px;overflow:hidden"><div class="t" id="v1" style="right:3px;top:8px;font-size:20px">814.62</div></div>
<div class="t" id="l3" style="left:661px;top:1066px;font-size:20px;letter-spacing:-0.3px">ROS Elapsed:</div>
<div class="a" style="left:795px;top:1057px;width:57px;height:34px;background:#fff;border:1px solid #b4b4b4;border-radius:3px;overflow:hidden"><div class="t" id="v2" style="right:3px;top:8px;font-size:20px">60.40</div></div>
<div class="t" id="l4" style="left:864px;top:1066px;font-size:20px;letter-spacing:0.45px">Wall Time:</div>
<div class="a" style="left:971px;top:1057px;width:57px;height:34px;background:#fff;border:1px solid #b4b4b4;border-radius:3px;overflow:hidden"><div class="t" id="v3" style="right:3px;top:8px;font-size:20px">814.64</div></div>
<div class="t" id="l5" style="left:1040px;top:1066px;font-size:20px;letter-spacing:0.2px">Wall Elapsed:</div>
<div class="a" style="left:1174px;top:1057px;width:57px;height:34px;background:#fff;border:1px solid #b4b4b4;border-radius:3px;overflow:hidden"><div class="t" id="v4" style="right:3px;top:8px;font-size:20px">60.40</div></div>
<div class="a" style="left:12px;top:1109px;width:68px;height:33px;background:linear-gradient(#fbfbfb,#ececec);border:1px solid #b4b4b4;border-radius:3px"></div>
<div class="t" id="b2" style="left:20px;top:1118px;font-size:20px">Reset</div>
<div class="t" id="fps" style="left:1158px;top:1114px;font-size:20px;letter-spacing:0.6px">49 fps</div>
<svg class="a" style="left:0;top:0" width="1254" height="1156"><g fill="#b4b4b4"><rect x="1240.4" y="1133.8" width="1.4" height="1.4"/><rect x="1237.4" y="1136.8" width="1.4" height="1.4"/><rect x="1240.4" y="1136.8" width="1.4" height="1.4"/><rect x="1234.5" y="1139.8" width="1.4" height="1.4"/><rect x="1237.4" y="1139.8" width="1.4" height="1.4"/><rect x="1240.4" y="1139.8" width="1.4" height="1.4"/><rect x="1231.5" y="1142.8" width="1.4" height="1.4"/><rect x="1234.5" y="1142.8" width="1.4" height="1.4"/><rect x="1237.4" y="1142.8" width="1.4" height="1.4"/><rect x="1240.4" y="1142.8" width="1.4" height="1.4"/></g></svg>
</body></html>
